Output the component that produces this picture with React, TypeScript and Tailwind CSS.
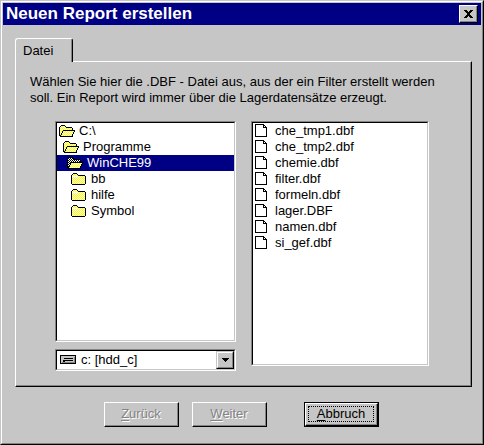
import React, { useState } from "react";

const folders = [
  { name: "C:\\", state: "open", indent: "pl-[2px]" },
  { name: "Programme", state: "open", indent: "pl-[6px]" },
  { name: "WinCHE99", state: "open", indent: "pl-[10px]" },
  { name: "bb", state: "closed", indent: "pl-[14px]" },
  { name: "hilfe", state: "closed", indent: "pl-[14px]" },
  { name: "Symbol", state: "closed", indent: "pl-[14px]" },
];

const files = [
  "che_tmp1.dbf",
  "che_tmp2.dbf",
  "chemie.dbf",
  "filter.dbf",
  "formeln.dbf",
  "lager.DBF",
  "namen.dbf",
  "si_gef.dbf",
];

// sunken 3D edge
const sunken =
  "border border-t-[#848484] border-l-[#848484] border-r-white border-b-white bg-white";
const sunkenInner =
  "border border-t-black border-l-black border-r-[#c6c6c6] border-b-[#c6c6c6]";

const OpenFolder = ({ selected }: { selected: boolean }) => (
  <svg className="w-4 h-4 shrink-0" viewBox="0 -1 16 16" shapeRendering="crispEdges" aria-hidden="true">
    <defs>
      <pattern id="dither" width="2" height="2" patternUnits="userSpaceOnUse">
        <rect width="2" height="2" fill="#ffff00" />
        <rect width="1" height="1" fill="#fff" />
        <rect x="1" y="1" width="1" height="1" fill="#fff" />
      </pattern>
      <pattern id="ditherDark" width="2" height="2" patternUnits="userSpaceOnUse">
        <rect width="2" height="2" fill="#000" />
        <rect width="1" height="1" fill="#fff" />
        <rect x="1" y="1" width="1" height="1" fill="#fff" />
      </pattern>
    </defs>
    <path d="M1 3h1v-1h4v1h1v1h6v3h-9v1h-1v2h-1v2h-1z" fill={selected ? "url(#ditherDark)" : "url(#dither)"} />
    <path d="M4 7h11v1h-1v2h-1v2h-11v-1h1v-2h1z" fill="url(#dither)" />
    <path
      d="M2 1h4v1h-4zM1 2h1v1h-1zM6 2h1v1h-1zM7 3h6v1h-6zM0 3h1v9h-1zM13 4h1v3h-1zM4 6h12v1h-12zM3 7h1v2h-1zM15 7h1v1h-1zM14 8h1v2h-1zM2 9h1v2h-1zM13 10h1v2h-1zM1 11h1v1h-1zM1 12h13v1h-13z"
      fill="#000"
    />
  </svg>
);

const ClosedFolder = () => (
  <svg className="w-4 h-4 shrink-0" viewBox="0 -1 16 16" shapeRendering="crispEdges" aria-hidden="true">
    <path d="M1 3h1v-1h4v1h1v1h7v8h-13z" fill="url(#dither)" />
    <path
      d="M2 1h4v1h-4zM1 2h1v1h-1zM6 2h1v1h-1zM7 3h7v1h-7zM0 3h1v9h-1zM14 4h1v8h-1zM1 12h13v1h-13z"
      fill="#000"
    />
    <path d="M1 4h6v1h-6z" fill="#fff" />
  </svg>
);

const FileIcon = () => (
  <svg className="w-4 h-4 shrink-0" viewBox="0 0 16 16" shapeRendering="crispEdges" aria-hidden="true">
    <path
      d="M0 1h9v1h-9zM0 1h1v13h-1zM0 13h12v1h-12zM11 4h1v10h-1zM8 1h1v4h-1zM8 4h4v1h-4zM9 2h1v1h-1zM10 3h1v1h-1z"
      fill="#000"
    />
  </svg>
);

const DriveIcon = () => (
  <svg className="w-4 h-4" viewBox="0 0 16 16" shapeRendering="crispEdges" aria-hidden="true">
    <path d="M0 3h16v9h-16z" fill="#000" />
    <path d="M1 4h14v7h-14z" fill="#c6c6c6" />
    <path d="M14 5h1v6h-1zM2 10h13v1h-13z" fill="#848484" />
    <path d="M4 6h9v1h-9zM3 8h10v1h-10zM3 9h2v1h-2z" fill="#000" />
  </svg>
);

interface WizardButtonProps {
  hotkey: string;
  label: string;
  disabled?: boolean;
}

const WizardButton: React.FC<WizardButtonProps> = ({ hotkey, label, disabled }) => {
  const content = (
    <>
      <span className="underline underline-offset-2">{hotkey}</span>
      {label}
    </>
  );

  if (disabled) {
    return (
      <button
        type="button"
        disabled
        className="w-[75px] h-[25px] border border-t-white border-l-white border-r-black border-b-black text-[#848484] [text-shadow:1px_1px_0_#fff]"
      >
        <span className="flex h-full items-center justify-center border-r border-b border-[#848484]">
          <span>{content}</span>
        </span>
      </button>
    );
  }

  return (
    <button type="button" className="w-[75px] h-[25px] border border-black">
      <span className="block h-full border border-t-white border-l-white border-r-black border-b-black">
        <span className="flex h-full border-r border-b border-[#848484] p-[2px]">
          <span className="flex flex-1 items-center justify-center border border-dotted border-black">
            <span>{content}</span>
          </span>
        </span>
      </span>
    </button>
  );
};

export default function App() {
  const [folder, setFolder] = useState("WinCHE99");

  return (
    <div className="min-h-screen flex flex-col bg-[#c6c6c6] border border-t-[#c6c6c6] border-l-[#c6c6c6] border-r-black border-b-black font-['Liberation_Sans',Arial,sans-serif] text-[13px] leading-4 text-black">
      <div className="flex-1 flex flex-col border border-t-white border-l-white border-r-[#848484] border-b-[#848484] p-px">
        {/* title bar */}
        <header className="h-[22px] flex items-center justify-between bg-[#000084] px-[3px]">
          <h1 className="text-[17px] leading-5 font-bold text-white">Neuen Report erstellen</h1>
          <button
            type="button"
            aria-label="Schließen"
            className="w-[19px] h-[18px] bg-[#c6c6c6] border border-t-white border-l-white border-r-black border-b-black"
          >
            <span className="flex h-full items-center justify-center border-r border-b border-[#848484]">
              <svg className="w-[9px] h-2" viewBox="0 0 9 8" shapeRendering="crispEdges" aria-hidden="true">
                <path
                  d="M0 0h3v1h-3zM6 0h3v1h-3zM1 1h3v1h-3zM5 1h3v1h-3zM2 2h5v1h-5zM3 3h3v2h-3zM2 5h5v1h-5zM1 6h3v1h-3zM5 6h3v1h-3zM0 7h3v1h-3zM6 7h3v1h-3z"
                  fill="#000"
                />
              </svg>
            </span>
          </button>
        </header>

        <main className="flex-1 flex flex-col pl-3 pr-[9px] pt-[13px] pb-[15px]">
          <div role="tablist" className="flex">
            <button
              type="button"
              role="tab"
              aria-selected="true"
              className="relative z-10 -mb-px w-[58px] h-6 rounded-t-[3px] border-t border-l border-t-white border-l-white border-r border-r-black bg-[#c6c6c6]"
            >
              <span className="flex h-full items-center pl-[7px] border-r border-[#848484]">Datei</span>
            </button>
          </div>

          {/* tab page */}
          <section className="flex-1 flex border border-t-white border-l-white border-r-black border-b-black">
            <div className="flex-1 flex flex-col border-r border-b border-[#848484] px-3.5 pt-3 pb-3.5">
              <p>
                Wählen Sie hier die .DBF - Datei aus, aus der ein Filter erstellt werden soll. Ein Report wird immer über die Lagerdatensätze erzeugt.
              </p>

              <div className="mt-[15px] flex-1 grid grid-cols-[181fr_178fr] gap-[15px] pl-[25px] pr-[27px]">
                <div className="flex flex-col gap-[7px]">
                  <div className={`flex-1 flex ${sunken}`}>
                    <ul className={`flex-1 ${sunkenInner}`}>
                      {folders.map((f) => (
                        <li key={f.name}>
                          <button
                            type="button"
                            onClick={() => setFolder(f.name)}
                            className={`w-full h-4 flex items-center gap-1 text-left ${f.indent} ${
                              folder === f.name ? "bg-[#000084] text-white" : ""
                            }`}
                          >
                            {f.state === "open" ? (
                              <OpenFolder selected={folder === f.name} />
                            ) : (
                              <ClosedFolder />
                            )}
                            {f.name}
                          </button>
                        </li>
                      ))}
                    </ul>
                  </div>

                  <div className={sunken}>
                    <div className={`relative ${sunkenInner}`}>
                      <select
                        aria-label="Laufwerk"
                        className="block w-full h-[18px] appearance-none bg-white pl-6 pr-5 outline-none"
                      >
                        <option>c: [hdd_c]</option>
                      </select>
                      <span className="pointer-events-none absolute left-[3px] top-px">
                        <DriveIcon />
                      </span>
                      <span className="pointer-events-none absolute right-0 inset-y-0 w-[18px] bg-[#c6c6c6] border border-t-[#c6c6c6] border-l-[#c6c6c6] border-r-black border-b-black">
                        <span className="flex h-full items-center justify-center border border-t-white border-l-white border-r-[#848484] border-b-[#848484]">
                          <svg className="w-[7px] h-1" viewBox="0 0 7 4" shapeRendering="crispEdges" aria-hidden="true">
                            <path d="M0 0h7v1h-1v1h-1v1h-1v1h-1v-1h-1v-1h-1v-1h-1z" fill="#000" />
                          </svg>
                        </span>
                      </span>
                    </div>
                  </div>
                </div>

                <div className={`mb-[5px] flex ${sunken}`}>
                  <ul className={`flex-1 ${sunkenInner}`}>
                    {files.map((name) => (
                      <li key={name}>
                        <button type="button" className="w-full h-4 flex items-center gap-1 pl-[2px] text-left">
                          <FileIcon />
                          {name}
                        </button>
                      </li>
                    ))}
                  </ul>
                </div>
              </div>
            </div>
          </section>

          <footer className="mt-[15px] flex pl-[89px]">
            <div className="flex gap-[13px] mr-[37px]">
              <WizardButton hotkey="Z" label="urück" disabled />
              <WizardButton hotkey="W" label="eiter" disabled />
            </div>
            <WizardButton hotkey="A" label="bbruch" />
          </footer>
        </main>
      </div>
    </div>
  );
}
